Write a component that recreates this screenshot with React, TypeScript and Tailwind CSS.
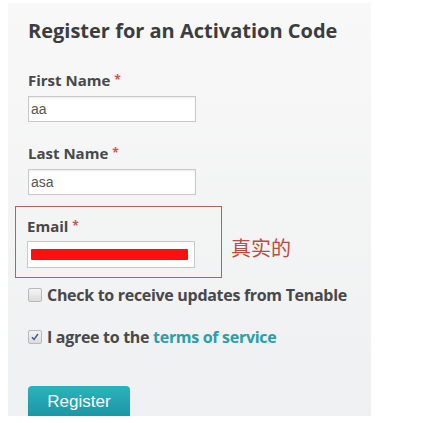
import React from 'react';

const font = { fontFamily: '"Open Sans", "Liberation Sans", sans-serif' };

const Label = ({ text }: { text: string }) => (
  <div className="h-[18px] text-[15px] leading-[18px] font-bold text-[#47484a]">
    {text}
    <span className="ml-[4px] text-[12px] align-top text-[#c9564e]">*</span>
  </div>
);

const Field = ({ value }: { value: string }) => (
  <div
    className="mt-[7px] w-[168px] h-[26px] border border-[#c9c9c9] bg-white flex items-center pl-[2px] text-[14px] text-[#555] shadow-[inset_0_1px_2px_rgba(0,0,0,0.08)]"
    style={{ fontFamily: '"Liberation Sans", Arial, sans-serif' }}
  >
    {value}
  </div>
);

const Check = ({ checked }: { checked?: boolean }) => (
  <span className="w-[14px] h-[14px] border border-[#b9b9b9] rounded-[2px] bg-gradient-to-b from-[#f4f4f4] to-[#dcdcdc] flex items-center justify-center shrink-0">
    {checked && (
      <svg width="10" height="10" viewBox="0 0 10 10">
        <path d="M2 5.2 L4 7.5 L8 2" fill="none" stroke="#3a5796" strokeWidth="1.4" />
      </svg>
    )}
  </span>
);

export default function App() {
  return (
    <div className="w-[424px] h-[423px] bg-white overflow-hidden" style={font}>
      <div className="ml-2 mt-[3px] w-[363px] h-[413px] overflow-hidden bg-gradient-to-b from-[#f8f8f8] to-[#eff0f1] pl-5 pt-[14px]">
        <h1 className="h-[28px] text-[20px] leading-[28px] font-bold text-[#3c3d3f]">
          Register for an Activation Code
        </h1>

        <div className="mt-[26px]">
          <Label text="First Name" />
          <Field value="aa" />
        </div>

        <div className="mt-[22px]">
          <Label text="Last Name" />
          <Field value="asa" />
        </div>

        <div className="mt-[11px] -ml-[13px] flex items-start">
          <div className="w-[207px] h-[72px] border-[1.5px] border-[#b8605b] pl-[11px] pt-[10px]">
            <Label text="Email" />
            <div className="mt-[6px] w-[168px] h-[27px] border border-[#c9c9c9] bg-white flex items-center pl-[3px]">
              <div className="w-[157px] h-[11px] bg-[#ff1010] rounded-[1px]" />
            </div>
          </div>
          <span
            className="ml-[9px] mt-[30px] text-[20px] leading-[24px] text-[#c2493f]"
            style={{ fontFamily: '"Noto Sans CJK SC", sans-serif' }}
          >
            真实的
          </span>
        </div>

        <label className="mt-[8px] h-[18px] flex items-center gap-[5px] text-[16px] font-bold text-[#47484a] tracking-[-0.3px]">
          <Check />
          Check to receive updates from Tenable
        </label>

        <label className="mt-[24px] h-[18px] flex items-center gap-[5px] text-[16px] font-bold text-[#47484a] tracking-[-0.3px]">
          <Check checked />
          <span>
            I agree to the <span className="text-[#2a9ead]">terms of service</span>
          </span>
        </label>

        <button
          className="mt-[40px] w-[102px] h-[36px] rounded-[4px] bg-gradient-to-b from-[#2cb2be] to-[#16929f] text-white text-[17px] leading-none pb-[6px] shadow-[0_1px_1px_rgba(0,0,0,0.2)]"
          style={{ fontFamily: '"Liberation Sans", Arial, sans-serif' }}
        >
          Register
        </button>
      </div>
    </div>
  );
}
